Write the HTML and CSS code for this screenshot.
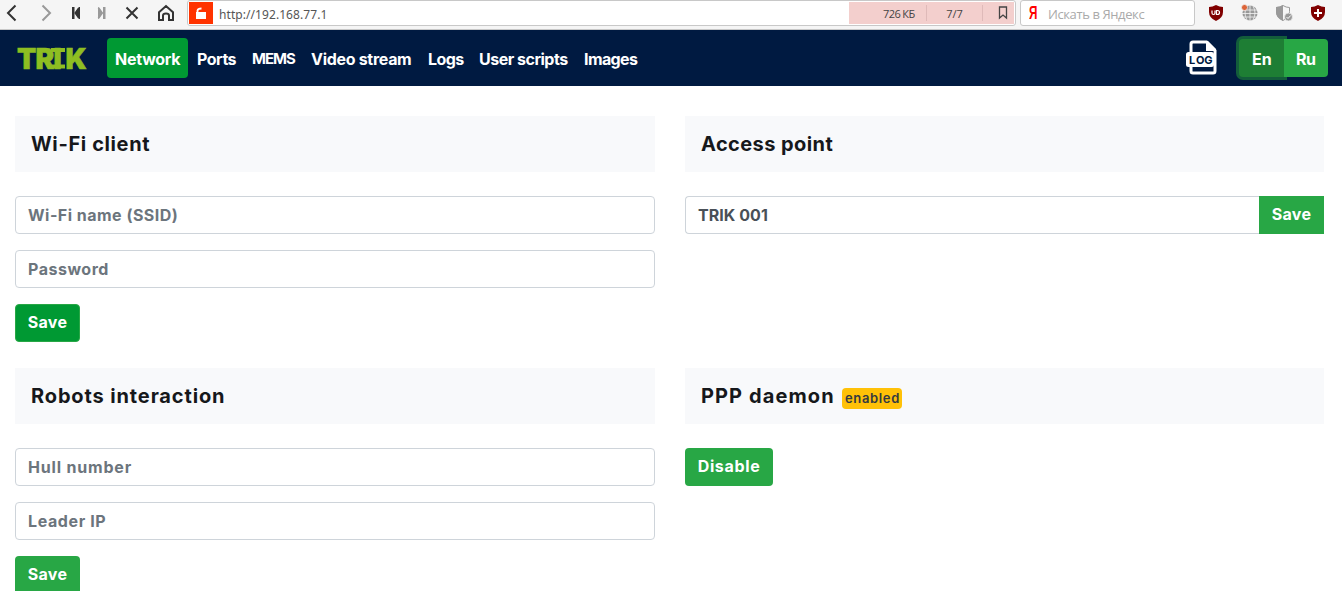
FILE: index.html
```html
<!DOCTYPE html>
<html lang="en">
<head>
<meta charset="utf-8">
<title>TRIK</title>
<link rel="stylesheet" href="styles.css">
</head>
<body>
<div class="browser">
  <svg class="controls" width="187" height="29" viewBox="0 0 187 29" fill="none" stroke="#333" stroke-width="2">
    <path d="M15.500 5.500 8 13l7.500 7.500"/>
    <path d="M42.500 5.500 50 13l-7.500 7.500" stroke="#999"/>
    <path d="M72 7h2.500v12H72zM75 13l4-6h1v12h-1z" fill="#333" stroke="none"/><path d="M79 8l-3.500 5 3.500 5" />
    <path d="M103 7h2.500v12H103zM102.500 13l-4-6h-.5v12h.5z" fill="#999" stroke="none"/><path d="M98.500 8l3.500 5-3.500 5" stroke="#999"/>
    <path d="M126.500 7.500l11 11M137.500 7.500l-11 11"/>
    <path d="M159 12.200 166 6l7 6.200V20h-4v-4.500q0-2-3-2t-3 2V20h-4z"/>
  </svg>
  <div class="address">
    <svg class="lock" width="24" height="22" viewBox="0 0 24 22"><path d="M7 10h10v7H7z" fill="#fff"/><path d="M8.500 11V8.500q.5-2 4-2" fill="none" stroke="#fff" stroke-width="1.800"/></svg>
    <span class="url">http://192.168.77.1</span>
    <div class="load">
      <span class="size">726 КБ</span><span class="count">7/7</span>
      <span class="mark"><svg width="10" height="14" viewBox="0 0 10 14"><path d="M1.500 1h7v11L5 9l-3.500 3z" fill="none" stroke="#444" stroke-width="1.300"/></svg></span>
    </div>
  </div>
  <div class="search"><span class="ya">Я</span><span class="hint">Искать в Яндекс</span></div>
  <svg class="extensions" width="147" height="29" viewBox="1195 0 147 29">
    <path d="M1216 5q3.500 2 7 2v5q0 6-7 9-7-3-7-9V7q3.500 0 7-2z" fill="#800000"/>
    <path d="M1212 10.500v2.500q0 1.500 1.500 1.500t1.500-1.500v-2.500M1216.500 10.500v4h1q2 0 2-2t-2-2z" fill="none" stroke="#fff" stroke-width="1.200"/>
    <circle cx="1250" cy="13" r="7.600" fill="#999"/><path d="M1242 10h16M1242 13.500h16M1242 17h16M1250 5v16M1247 6q-4 7 0 14M1253 6q4 7 0 14" stroke="#f5f5f5" stroke-width=".8" fill="none"/><circle cx="1244.500" cy="7.500" r="3" fill="#dc6438" stroke="#f5f5f5" stroke-width=".7"/>
    <path d="M1283 5.500q3 2 6.500 2v4q0 6-6.500 9-6.500-3-6.500-9v-4q3.500 0 6.500-2z" fill="#f5f5f5" stroke="#999"/><path d="M1283 5v16q-7-3-7-9V7q4 0 7-2z" fill="#999"/><circle cx="1288.500" cy="17" r="4" fill="#999" stroke="#f5f5f5" stroke-width=".7"/><path d="M1286.500 17l1.500 1.500 2.700-3" fill="none" stroke="#fff"/>
    <path d="M1318 5q3.500 2 7 2v5q0 6-7 9-7-3-7-9V7q3.500 0 7-2z" fill="#800000"/><path d="M1318 9v8M1314 13h8" stroke="#fff" stroke-width="2"/>
  </svg>
</div>
<nav class="navbar">
  <svg class="logo" width="74" height="40" viewBox="0 -6 74 40"><text x="2 20.500 38.500 50.500" y="24.500">TRIK</text><path d="M36 4H50v4H36zM36 20.500H50v4H36z"/></svg>
  <div class="links">
    <a class="link active w-network">Network</a><a class="link w-ports">Ports</a><a class="link w-mems">MEMS</a><a class="link w-video">Video stream</a><a class="link w-logs">Logs</a><a class="link w-scripts">User scripts</a><a class="link w-images">Images</a>
  </div>
  <svg class="log" width="32" height="36" viewBox="0 0 32 36">
    <path d="M5 12V4q0-2 2-2h13.500L29 10.500V31q0 2-2 2H7q-2 0-2-2v-4" fill="none" stroke="#fff" stroke-width="3"/>
    <path d="M20 1v10h10V9L22 1z" fill="#fff"/>
    <rect x="0" y="12" width="28" height="15" rx="2.500" fill="#fff"/>
    <text x="3 10 18.300" y="23.700">LOG</text>
  </svg>
  <div class="lang"><span class="en">En</span><span class="ru">Ru</span></div>
</nav>
<main class="grid">
  <section class="panel">
    <h5 class="head"><span class="t-wifi">Wi-Fi client</span></h5>
    <div class="field"><span class="t-ssid">Wi-Fi name (SSID)</span></div>
    <div class="field"><span class="t-pass">Password</span></div>
    <button class="btn pressed">Save</button>
  </section>
  <section class="panel">
    <h5 class="head"><span class="t-access">Access point</span></h5>
    <div class="group"><div class="field value"><span class="t-value">TRIK 001</span></div><button class="btn square">Save</button></div>
  </section>
  <section class="panel">
    <h5 class="head"><span class="t-robots">Robots interaction</span></h5>
    <div class="field"><span class="t-hull">Hull number</span></div>
    <div class="field"><span class="t-leader">Leader IP</span></div>
    <button class="btn">Save</button>
  </section>
  <section class="panel">
    <h5 class="head"><span class="t-ppp">PPP daemon</span><span class="badge">enabled</span></h5>
    <button class="btn wide">Disable</button>
  </section>
</main>
</body>
</html>
```
FILE: styles.css
```css
* { box-sizing: border-box; }
html, body { height: 591px; overflow: hidden; }
body { margin: 0; background: #fff; font-family: Inter, sans-serif; font-size: 16px; line-height: 24px; white-space: nowrap; }
svg { display: block; flex: none; }
.browser { display: flex; height: 30px; background: #f5f5f5; border-bottom: 1px solid #c8c8c8; font-family: "Open Sans", sans-serif; }
.address { display: flex; width: 829px; height: 26px; padding: 1px 0 0 1px; border: 1px solid #c8c8c8; border-radius: 3px; background: #fff; }
.lock { background: #ff3300; }
.url { width: 635px; padding-left: 6px; font-family: "Noto Sans", sans-serif; font-size: 12px; line-height: 25px; letter-spacing: .07px; color: #555; }
.load { display: flex; width: 165px; height: 22px; margin-left: 1px; background: #f3cfcd; font-size: 11px; line-height: 22px; color: #444; }
.size, .count { height: 16px; margin-top: 3px; line-height: 17px; border-right: 1px solid #dfbab9; }
.size { width: 78px; padding-left: 34px; letter-spacing: -.6px; font-weight: 500; }
.count { width: 56px; text-align: center; }
.mark { padding: 4px 0 0 15px; }
.search { display: flex; width: 175px; height: 26px; margin-left: 4px; padding-left: 8px; border: 1px solid #c8c8c8; border-radius: 3px; background: #fff; line-height: 26px; }
.ya { width: 19px; color: #f00; font-family: "Liberation Sans", sans-serif; font-weight: bold; font-size: 18px; line-height: 25px; transform: scaleX(.65); transform-origin: left; }
.hint { color: #aaa; font-size: 13px; letter-spacing: -.4px; }
.navbar { display: flex; align-items: center; height: 56px; background: #001a41; color: #fff; font-weight: 700; }
.logo { margin-left: 15px; overflow: visible; }
.logo text { font-family: Inter, sans-serif; font-weight: 900; font-size: 28px; fill: #8ebe22; stroke: #8ebe22; stroke-width: .6; }
.logo path { fill: #8ebe22; }
.links { display: flex; margin-left: 18px; }
.link { height: 40px; padding: 9px 0 0 8px; border-radius: 4px; }
.active { background: #009933; }
.w-network { width: 81px; letter-spacing: -.25px; }
.w-ports { width: 55px; padding-left: 9px; letter-spacing: -.5px; }
.w-mems { width: 60px; padding-left: 9px; font-size: 15px; letter-spacing: -1px; }
.w-video { width: 116px; letter-spacing: -.3px; }
.w-logs { width: 51px; padding-left: 9px; letter-spacing: -.6px; }
.w-scripts { width: 105px; padding-left: 9px; letter-spacing: -.5px; }
.w-images { width: 70px; padding-left: 9px; letter-spacing: -.6px; }
.log { margin-left: 541px; }
.log text { font-family: Inter, sans-serif; font-weight: 700; font-size: 11px; fill: #001a41; }
.lang { display: flex; margin-left: 21px; line-height: 40px; }
.en { width: 45px; height: 38px; padding-left: 13px; background: #1e7e34; border-radius: 4px 0 0 4px; box-shadow: 0 0 0 3px #135d3b; }
.ru { position: relative; width: 44px; height: 38px; padding-left: 12px; letter-spacing: -.6px; background: #28a745; border-radius: 0 4px 4px 0; }
.grid { display: grid; grid-template-columns: 640px 639px; column-gap: 30px; row-gap: 26px; padding: 30px 0 0 15px; }
.panel { display: flex; flex-direction: column; align-items: flex-start; height: 226px; }
.head { display: flex; width: 100%; height: 56px; margin: 0 0 24px; padding: 16px; background: #f8f9fb; color: #16181b; font-size: 20px; font-weight: 700; }
.field { width: 100%; height: 38px; margin-bottom: 16px; padding: 6px 12px; border: 1px solid #ced4da; border-radius: 4px; color: #6c757d; font-weight: 700; }
.group { display: flex; width: 100%; }
.value { flex: 1; border-right: 0; border-radius: 4px 0 0 4px; color: #495057; }
.t-wifi { letter-spacing: .62px; }
.t-access { letter-spacing: .42px; }
.t-robots { letter-spacing: .87px; }
.t-ppp { width: 136px; letter-spacing: 1.1px; }
.t-ssid { letter-spacing: .48px; }
.t-pass { letter-spacing: .52px; }
.t-hull { letter-spacing: .82px; }
.t-leader { letter-spacing: .6px; }
.t-value { letter-spacing: .05px; }
.btn { width: 65px; height: 38px; padding: 0 0 2px; border: 0; border-radius: 4px; background: #28a745; color: #fff; font: 700 16px/36px Inter, sans-serif; letter-spacing: .3px; }
.pressed { background: #009933; border: 1px solid #28a745; line-height: 34px; }
.square { border-radius: 0; }
.wide { width: 88px; letter-spacing: .65px; }
.badge { height: 21px; width: 60px; margin: 4px 0 0 5px; padding-left: 3px; border-radius: 4px; background: #ffc107; color: #343a40; font-size: 13px; font-weight: 600; line-height: 20px; letter-spacing: .65px; }
```
